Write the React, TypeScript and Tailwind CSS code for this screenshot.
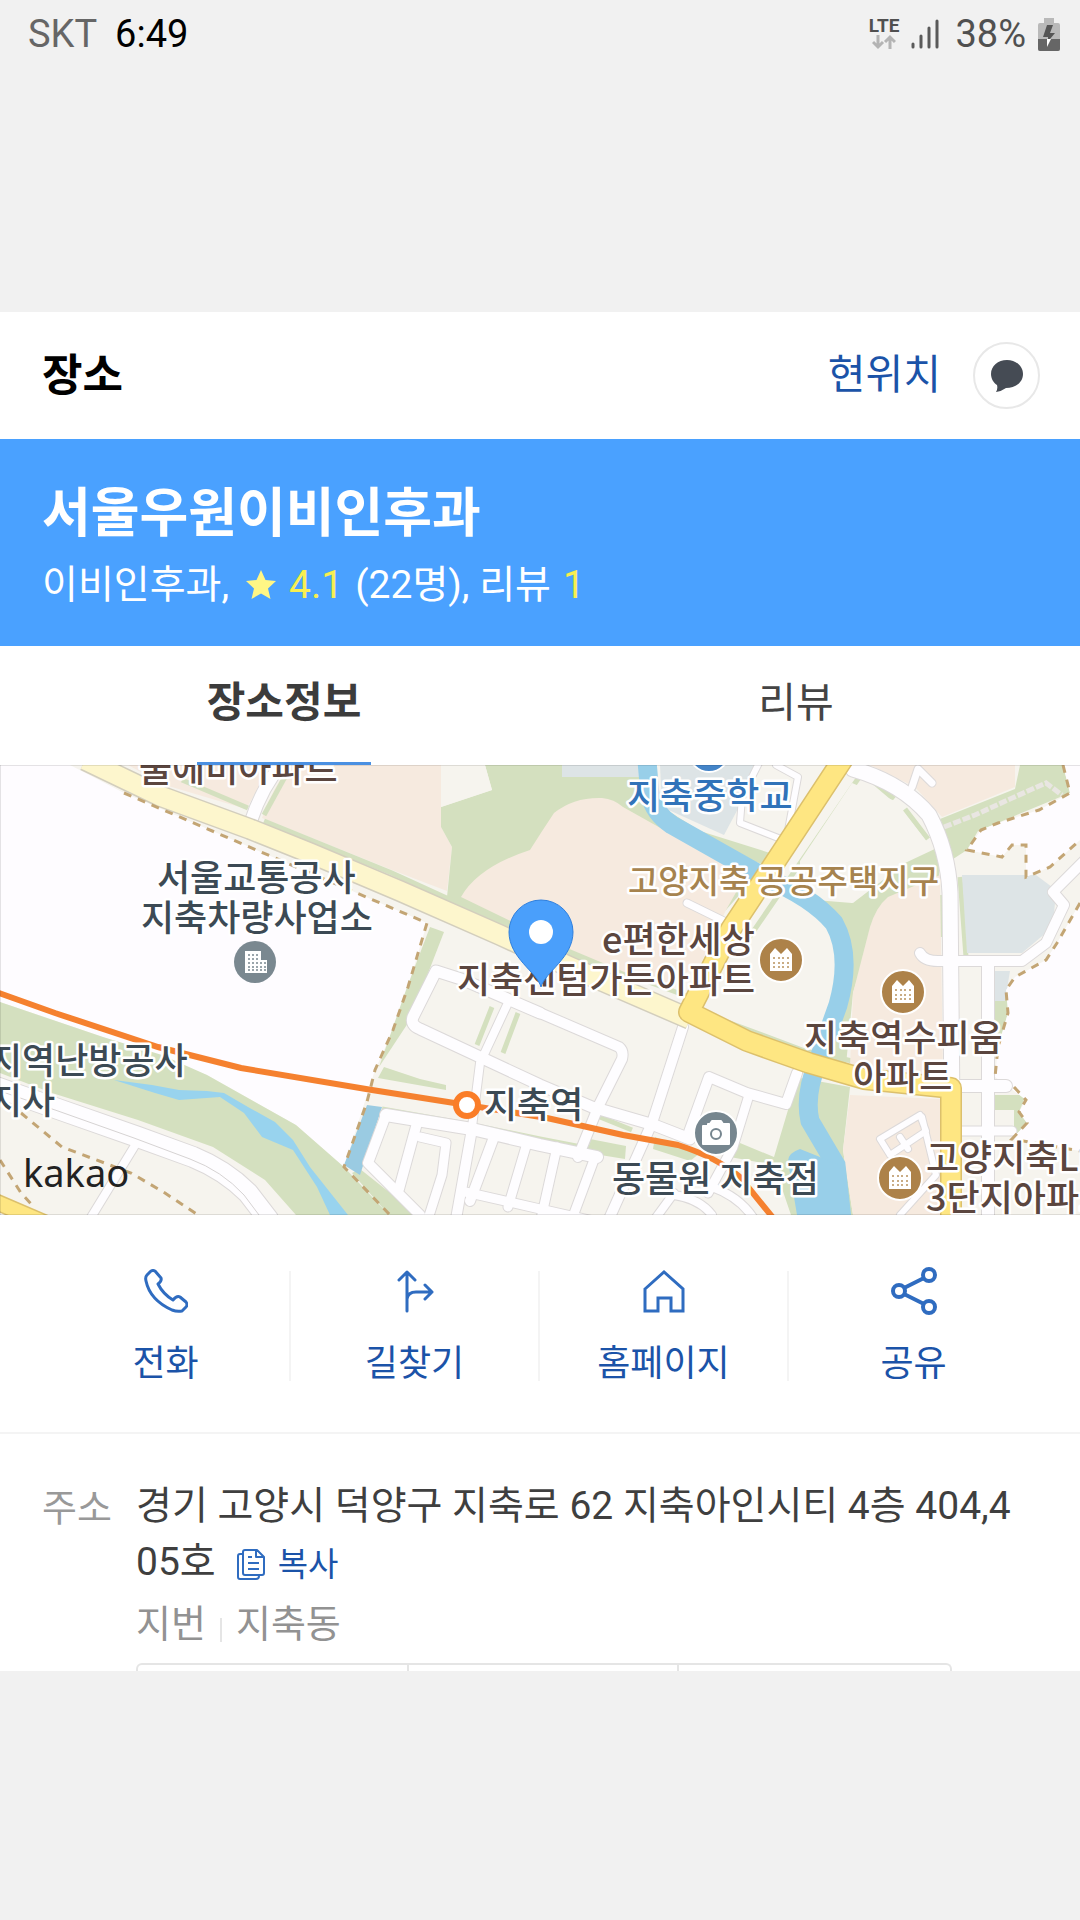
type Road = { d: string; w: number };

const streets: Road[] = [
  { d: "M251 56 Q262 22 284 -4", w: 12 },
  { d: "M-4 322 L58 344 L138 372 L193 392 Q225 405 248 428 L268 454", w: 20 },
  { d: "M134 382 L90 454", w: 8 },
  { d: "M540 248 L461 214 L436 206 L413 252 Q410 260 420 264 L540 320 L592 342 L654 360 L690 374", w: 11 },
  { d: "M540 248 L619 282 Q624 286 622 294 L599 340 L578 392", w: 10 },
  { d: "M683 262 L652 358 L609 454", w: 10 },
  { d: "M688 370 L709 312 L747 328 L786 339 L797 308", w: 10 },
  { d: "M749 330 L733 382 L708 428", w: 9 },
  { d: "M507 240 L480 298 L472 362", w: 8 },
  { d: "M386 350 L472 364 L540 380 L597 392", w: 12 },
  { d: "M386 350 L368 398 L420 450", w: 10 },
  { d: "M417 358 L399 424", w: 10 },
  { d: "M420 372 L446 378 L442 410 L428 454", w: 9 },
  { d: "M472 364 L456 454", w: 10 },
  { d: "M494 372 L470 436", w: 10 },
  { d: "M527 378 L508 442", w: 9 },
  { d: "M461 426 L540 444 L620 462", w: 9 },
  { d: "M557 382 L541 454", w: 9 },
  { d: "M595 392 L572 454", w: 9 },
  { d: "M674 428 L655 454 M674 430 Q700 434 712 450 M712 422 Q740 432 754 454", w: 8 },
  { d: "M760 -4 L742 32 L740 58 L786 76 L798 12 L776 0", w: 6 },
  { d: "M687 138 L732 160", w: 7 },
  { d: "M853 4 Q902 18 929 50 Q948 86 950 128 L953 454", w: 15 },
  { d: "M912 22 L918 4 L932 18", w: 7 },
  { d: "M920 188 Q924 196 938 196 L1022 196 L1046 178 L1064 140 L1053 127 L1084 96", w: 10 },
  { d: "M988 198 L988 454", w: 12 },
  { d: "M960 321 L1006 321", w: 12 },
  { d: "M960 366 L1012 366", w: 9 },
  { d: "M890 390 L880 374 L920 350 L926 366 L890 390 M900 372 L908 384 M922 352 L936 410 L900 450", w: 6 },
];

const dashed = [
  "M124 28 L275 93 L427 158 L408 222 L393 265 L375 305 L367 337 L344 402 L390 450",
  "M21 348 L62 382 L131 408 L165 428 L198 450",
  "M0 395 L21 428 L34 442",
  "M1063 0 L1070 28 L1039 45 L998 58 L981 65 L967 85 L1002 92 L1012 80 L1026 80 L1026 112 L1050 102 L1080 75",
  "M1080 138 L1057 178 L1046 195 L1015 212 L1006 225 L1008 248 L998 282 L995 312",
  "M1014 322 L1026 335 L1019 347 L1027 358 L1012 374 L1080 386",
];

const labels = [
  { x: 139, y: 17, text: "물에미아파트", fill: "#5b463f" },
  { x: 157, y: 126, text: "서울교통공사", fill: "#3c4a54" },
  { x: 141, y: 166, text: "지축차량사업소", fill: "#3c4a54" },
  { x: -11, y: 309, text: "지역난방공사", fill: "#3c4a54" },
  { x: -11, y: 349, text: "지사", fill: "#3c4a54" },
  { x: 457, y: 228, text: "지축센텀가든아파트", fill: "#5b463f" },
  { x: 602, y: 188, text: "e편한세상", fill: "#5b463f" },
  { x: 627, y: 44, text: "지축중학교", fill: "#3173b9" },
  { x: 804, y: 286, text: "지축역수피움", fill: "#5b463f" },
  { x: 853, y: 325, text: "아파트", fill: "#5b463f" },
  { x: 926, y: 406, text: "고양지축LH", fill: "#5b463f" },
  { x: 926, y: 446, text: "3단지아파트", fill: "#5b463f" },
  { x: 612, y: 427, text: "동물원 지축점", fill: "#3c4a54" },
  { x: 484, y: 353, text: "지축역", fill: "#3c4a54" },
];

const apartments = [
  { x: 781, y: 195 },
  { x: 903, y: 227 },
  { x: 900, y: 413 },
];

function WindowDots({ xs, ys, fill }: { xs: number[]; ys: number[]; fill: string }) {
  return (
    <>
      {ys.map((y) => xs.map((x) => <rect key={`${x}-${y}`} x={x} y={y} width="2" height="2" fill={fill} />))}
    </>
  );
}

function PlaceMap() {
  return (
    <svg viewBox="0 0 1080 450" className="block h-auto w-full" role="img" aria-label="지도">
      <rect width="1080" height="450" fill="#f6f4ee" />

      {/* rail yard */}
      <path d="M0 0H70L124 28L275 93L427 158L408 222L393 265L375 305L344 402L296 360L207 310L103 272L0 237Z" fill="#fefcff" />
      {/* apartment blocks */}
      <g fill="#f6eadf">
        <path d="M128 0H272L246 44L165 20Z" />
        <path d="M262 53Q272 24 290 0H441V62L452 82L447 126L392 105Z" />
        <path d="M870 0H1015V22L942 52L915 22Z" />
      </g>
      {/* parks */}
      <g fill="#d4e0bf">
        <path d="M485 0H650L660 50L757 110L726 145L600 210L447 132L452 82L441 62V42L492 25Z" />
        <path d="M0 237L103 272L162 290L207 310L255 337L296 360L344 402L389 450H296L265 415L213 382L138 355L52 328L0 308Z" />
        <path d="M430 162L444 167L410 255L379 302L406 225Z" />
        <path d="M384 302L420 314L446 320V325L378 313Z" />
        <path d="M360 404L418 450H389L352 408Z" />
        <path d="M662 42L700 66L770 88L764 100L690 72Z" />
        <path d="M815 135L852 138L905 98L939 82V120L888 140L872 166L853 228L846 300L812 292L840 220L842 180Z" />
        <path d="M940 54L1015 24L1020 0H1063L1070 28L1000 57L978 66L967 85L950 96Z" />
        <path d="M795 312L850 322L843 385L853 450H791L774 400L730 392L740 378L774 392L788 345Z" />
        <path d="M590 374L626 381L625 394L588 388Z" />
        <path d="M655 372L700 388L690 396L653 384Z" />
        <path d="M995 330H1026L1019 347L1027 358L1014 372V345H995Z" />
        <path d="M1000 225H1008V248L998 282H992V240Z" />
      </g>
      <path d="M441 0H485L492 25L441 42Z" fill="#f6f4ee" />
      <g fill="none" stroke="#d4e0bf" strokeWidth="5">
        <path d="M182 15L248 43" />
        <path d="M264 50L286 10" />
        <path d="M264 56L392 108L510 162L560 184L700 236" />
        <path d="M382 344L472 360L540 374L602 386" />
        <path d="M492 242L477 280M518 248L503 288M600 352L632 365" />
        <path d="M708 250L805 286L900 306M862 8L744 180" />
        <path d="M940 130V172M960 112L966 192M868 12L894 34M905 44L928 74" />
      </g>
      <path d="M852 18L895 36L926 76L905 98L853 138L800 118L800 96Z" fill="#f6f4ee" />
      <g fill="#f6eadf">
        <path d="M461 132Q478 102 530 85Q542 66 554 48Q574 32 602 33Q614 34 623 42L712 92L747 108L726 145L700 200L660 222L560 180Z" />
        <path d="M888 132L940 110L943 312L850 302L853 228L870 162Q876 142 888 132Z" />
        <path d="M850 330L941 334L943 450H853L843 385Z" />
      </g>
      <g fill="#dde4e6">
        <path d="M562 0H640V12H562Z" />
        <path d="M660 0H757L740 40L724 70L662 42Z" />
        <path d="M962 110H1036L1056 125L1053 162L1022 188H967Z" />
        <path d="M994 206H1010L1005 236H994Z" />
      </g>

      {/* water */}
      <path d="M114 315L152 320L179 325L207 326L224 328L248 342L275 357L293 375L310 402L348 450H330L317 422L293 385L262 372L244 348L220 332L179 335L155 328Z" fill="#98d3ee" />
      <path d="M367 340L382 342L360 410L344 400Z" fill="#9acbe2" />
      <path d="M647 -4L650 30Q654 48 672 60L764 112Q812 132 834 158Q852 190 838 240L818 296Q804 330 810 356L836 400L842 454" fill="none" stroke="#98cfe9" strokeWidth="19" />
      <path d="M800 384Q788 388 788 396L797 450H850L840 400Z" fill="#98cfe9" />

      {/* land outside the district */}
      <g fill="#fefcff">
        <path d="M1063 0L1070 28L1039 45L998 58L981 65L967 85L1002 92L1012 80H1026V112L1050 102L1080 75V0Z" />
        <path d="M1080 138L1057 178L1046 195L1015 212L1006 225L1008 248L998 282L995 312L1026 335L1019 347L1027 358L1012 374L1080 386Z" />
      </g>
      <path d="M944 62L975 50L1010 34L1046 18L1062 30" fill="none" stroke="#e9e6e2" strokeWidth="5" strokeDasharray="8 2" />

      <g fill="none" stroke="#dcd9d9" strokeLinejoin="round" strokeLinecap="round">
        {streets.map((s) => (
          <path key={s.d} d={s.d} strokeWidth={s.w + 2} />
        ))}
      </g>
      <g fill="none" stroke="#fefdff" strokeLinejoin="round" strokeLinecap="round">
        {streets.map((s) => (
          <path key={s.d} d={s.d} strokeWidth={s.w} />
        ))}
      </g>
      <path d="M0 326L58 346L134 373L190 394Q222 406 244 430L262 454" fill="none" stroke="#d6d3d3" />

      {/* main roads */}
      <g fill="none" strokeLinejoin="round">
        <path d="M85 -5L160 31L250 64L310 88L400 126L500 170L570 202L690 254" stroke="#d3cebd" strokeWidth="22" />
        <path d="M85 -5L160 31L250 64L310 88L400 126L500 170L570 202L690 254" stroke="#fdf6cd" strokeWidth="19" />
        <path d="M843 -6L731 164L689 247L747 276L809 298L864 314L951 323V454" stroke="#dcc06c" strokeWidth="22" />
        <path d="M843 -6L731 164L689 247L747 276L809 298L864 314L951 323V454" stroke="#fee682" strokeWidth="19" />
        <path d="M-6 436L50 460" stroke="#dcc06c" strokeWidth="17" />
        <path d="M-6 436L50 460" stroke="#fee682" strokeWidth="14" />
      </g>

      <g fill="none" stroke="#c3a574" strokeWidth="3" strokeDasharray="8 7">
        {dashed.map((d) => (
          <path key={d} d={d} />
        ))}
      </g>

      {/* subway line 3 */}
      <path d="M-4 227L55 248L158 282L241 303L372 325L467 340L547 353L623 370L678 380Q716 392 740 412L774 454" fill="none" stroke="#f5812f" strokeWidth="6" />

      <g className="font-['Noto_Sans_CJK_KR',sans-serif] font-medium" fontSize="36" stroke="#fff" strokeWidth="5" strokeLinejoin="round" paintOrder="stroke">
        {labels.map((l) => (
          <text key={l.text} x={l.x} y={l.y} fill={l.fill}>
            {l.text}
          </text>
        ))}
        <text x="628" y="128" fontSize="33" fill="#a6834e">
          고양지축 공공주택지구
        </text>
      </g>
      <text x="23" y="422" fontSize="38" fill="#222" className="font-['Noto_Sans',sans-serif]">
        kakao
      </text>

      {/* markers */}
      <circle cx="467" cy="340" r="11" fill="#fff" stroke="#fa7d28" strokeWidth="6" />
      <circle cx="709" cy="-13" r="20" fill="#4384c8" stroke="#fff" strokeWidth="2" />
      <g transform="translate(255 197)">
        <circle r="21" fill="#7a8890" />
        <path d="M-10 -11H6V-2H12V11H-10Z" fill="#fff" />
        <WindowDots xs={[-7, -3, 1]} ys={[-8, -4, 0, 4, 7]} fill="#9aa5ab" />
        <WindowDots xs={[5, 9]} ys={[0, 4, 7]} fill="#9aa5ab" />
      </g>
      <g transform="translate(716 368)">
        <circle r="22" fill="#76868f" stroke="#fff" strokeWidth="2" />
        <path d="M-13 -7H-8V-9H-6L-4 -12H5L7 -9H13V11H-13Z" fill="#fff" stroke="#fff" strokeWidth="2" strokeLinejoin="round" />
        <circle cy="1" r="5" fill="#fff" stroke="#76868f" strokeWidth="2" />
      </g>
      {apartments.map((a) => (
        <g key={a.x} transform={`translate(${a.x} ${a.y})`}>
          <circle r="22" fill="#ad8249" stroke="#fff" strokeWidth="2" />
          <path d="M-11 11V-6L-6 -12L0 -6L6 -12L11 -6V11Z" fill="#fff" />
          <WindowDots xs={[-8, -3, 1, 6]} ys={[-3, 2, 6]} fill="#c9ac84" />
        </g>
      ))}
      <path d="M541 222C537 207 509 193 509 167A32 32 0 0 1 573 167C573 193 545 207 541 222Z" fill="#4a9ffb" stroke="#2f7fdd" strokeWidth="1" />
      <circle cx="541" cy="167" r="12" fill="#fff" />
      <path d="M0 0.5H1080M0 449.5H1080M0.5 0V450" stroke="#000" strokeOpacity="0.1" />
    </svg>
  );
}

function PhoneIcon() {
  return (
    <svg width="44" height="44" viewBox="0 0 44 44" fill="none" stroke="#2f6cc0" strokeWidth="3" strokeLinejoin="round" aria-hidden="true">
      <path d="M3 6L7 2Q9 1 11 2L17 9Q18 12 14 15Q19 25 29 31Q33 26 36 28L42 33Q44 36 42 38L38 42Q33 43 28 41Q6 31 2 12Q1 8 3 6Z" />
    </svg>
  );
}

function RouteIcon() {
  return (
    <svg width="44" height="44" viewBox="0 0 44 44" fill="none" stroke="#2f6cc0" strokeWidth="3" strokeLinecap="round" strokeLinejoin="round" aria-hidden="true">
      <path d="M14 42V3M6 11L14 3L22 11M14 30Q15 23 23 23H39M32 16L39 23L32 30" />
    </svg>
  );
}

function HomeIcon() {
  return (
    <svg width="44" height="44" viewBox="0 0 44 44" fill="none" stroke="#2f6cc0" strokeWidth="3" aria-hidden="true">
      <path d="M3 20L22 3L41 20V42H29V29H16V42H3Z" />
    </svg>
  );
}

function ShareIcon() {
  return (
    <svg width="48" height="48" viewBox="0 0 48 48" fill="none" stroke="#2f6cc0" strokeWidth="4" aria-hidden="true">
      <circle cx="9" cy="24" r="6" />
      <circle cx="39" cy="8" r="6" />
      <circle cx="39" cy="40" r="6" />
      <path d="M14 21L34 11M14 27L34 37" />
    </svg>
  );
}

const actions = [
  { label: "전화", icon: <PhoneIcon /> },
  { label: "길찾기", icon: <RouteIcon /> },
  { label: "홈페이지", icon: <HomeIcon /> },
  { label: "공유", icon: <ShareIcon /> },
];

function StatusBar() {
  return (
    <div className="flex h-[68px] items-center justify-between pl-7 pr-5 text-[38px] leading-none">
      <div className="flex gap-[18px]">
        <span className="text-[#666]">SKT</span>
        <span className="text-black">6:49</span>
      </div>
      <div className="flex items-center text-[#505050]">
        <div className="mr-3 flex flex-col items-center">
          <span className="text-[19px] leading-4 font-bold">LTE</span>
          <svg width="24" height="16" viewBox="0 0 24 16" fill="none" stroke="#b4b4b4" strokeWidth="3" aria-hidden="true">
            <path d="M6 1V13M1 8L6 13L11 8M18 15V3M13 8L18 3L23 8" />
          </svg>
        </div>
        <svg width="28" height="30" viewBox="0 0 28 30" stroke="#5a5a5a" strokeWidth="3" strokeLinecap="round" aria-hidden="true">
          <path d="M2 25V28M10 17V28M18 9V28M26 2V28" />
        </svg>
        <span className="ml-4">38%</span>
        <svg className="ml-3" width="22" height="34" viewBox="0 0 22 34" aria-hidden="true">
          <path d="M6 1H16V6H20Q22 6 22 8V32Q22 34 20 34H2Q0 34 0 32V8Q0 6 2 6H6Z" fill="#b9b9b9" />
          <path d="M0 22H22V32Q22 34 20 34H2Q0 34 0 32Z" fill="#666" />
          <path d="M9 8L5 20H10V22H12L17 16H12L15 8Z" fill="#555" />
          <path d="M9 22H13L9 30Z" fill="#fff" />
        </svg>
      </div>
    </div>
  );
}

export default function App() {
  return (
    <div className="min-h-screen bg-[#f1f1f1] font-[Roboto,'Noto_Sans_CJK_KR',sans-serif]">
      <StatusBar />

      <main className="mt-[244px] bg-white">
        <header className="flex h-[127px] items-center justify-between pr-10 pl-[42px]">
          <h1 className="text-[44px] leading-none font-bold text-black">장소</h1>
          <div className="flex items-center gap-8">
            <a href="#here" className="text-[41px] leading-none text-[#1b53a8]">
              현위치
            </a>
            <button aria-label="채팅" className="flex size-[67px] items-center justify-center rounded-full border-2 border-[#e8e8e8]">
              <svg width="34" height="34" viewBox="0 0 34 34" fill="#454b54" aria-hidden="true">
                <path d="M17 1C8 1 1 7 1 15C1 20 4 24 7 26Q8 30 6 33Q12 32 16 29C26 29 33 23 33 15C33 7 26 1 17 1Z" />
              </svg>
            </button>
          </div>
        </header>

        <section className="flex h-[207px] flex-col justify-center bg-[#4aa1ff] px-[42px] pt-3 text-white">
          <h2 className="text-[53px] leading-[72px] font-bold">서울우원이비인후과</h2>
          <p className="flex items-center text-[39px] leading-[70px]">
            이비인후과,
            <svg className="mr-3 ml-4" width="32" height="32" viewBox="0 0 32 32" fill="#fff685" aria-hidden="true">
              <path d="M16 1L20.500 11L31 12L23 19.500L25.500 30L16 24.500L6.500 30L9 19.500L1 12L11.500 11Z" />
            </svg>
            <span className="text-[#f8ee50]">4.1</span>
            <span className="mx-3">(22명), 리뷰</span>
            <span className="text-[#f8ee50]">1</span>
          </p>
        </section>

        <nav className="flex h-[119px] px-7" role="tablist">
          <div className="flex flex-1 justify-center">
            <button role="tab" aria-selected="true" className="border-b-[3px] border-[#4a90e2] px-[10px] pb-1 text-[42px] font-bold text-[#3c3c3c]">
              장소정보
            </button>
          </div>
          <div className="flex flex-1 justify-center">
            <button role="tab" aria-selected="false" className="pb-1 text-[41px] text-[#444]">
              리뷰
            </button>
          </div>
        </nav>

        <PlaceMap />

        <div className="grid grid-cols-4 border-b-2 border-[#f4f4f4] px-[42px] pt-14 pb-[51px]">
          {actions.map((a) => (
            <button key={a.label} className="flex flex-col items-center border-r-2 border-[#f4f4f4] text-[36px] text-[#1b53a8] last:border-r-0">
              <span className="flex h-10 items-center">{a.icon}</span>
              <span className="pt-9 leading-[34px]">{a.label}</span>
            </button>
          ))}
        </div>

        <section className="flex pt-11 pr-14 pl-[42px] leading-[56px]">
          <h3 className="w-[94px] shrink-0 pt-[2px] text-[38px] text-[#999]">주소</h3>
          <div className="min-w-0 flex-1">
            <p className="text-[39px] break-all text-[#3f3f3f]">
              경기 고양시 덕양구 지축로 62 지축아인시티 4층 404,405호
              <button className="ml-5 inline-flex h-10 items-center gap-3 align-middle text-[33px] leading-none text-[#1b53a8]">
                <svg width="30" height="34" viewBox="0 0 30 34" fill="none" stroke="#2f6cc0" strokeWidth="2" strokeLinejoin="round" aria-hidden="true">
                  <path d="M7 6H4Q2 6 2 8V29Q2 31 4 31H20Q23 31 23 28" />
                  <path d="M9 2H21L28 9V25Q28 27 26 27H9Q7 27 7 25V4Q7 2 9 2ZM20 2V9H28M12 9H16M12 15H23M12 21H23" />
                </svg>
                복사
              </button>
            </p>
            <p className="flex items-center pt-[6px] text-[38px] text-[#929292]">
              지번
              <span className="mx-[14px] mt-3 h-6 border-l-2 border-[#e5e5e5]" />
              지축동
            </p>
            <div className="mt-[11px] mr-[72px] grid h-2 grid-cols-3 divide-x-2 divide-[#e5e5e5] rounded-t-md border-2 border-b-0 border-[#e5e5e5]">
              <span />
              <span />
              <span />
            </div>
          </div>
        </section>
      </main>
    </div>
  );
}
